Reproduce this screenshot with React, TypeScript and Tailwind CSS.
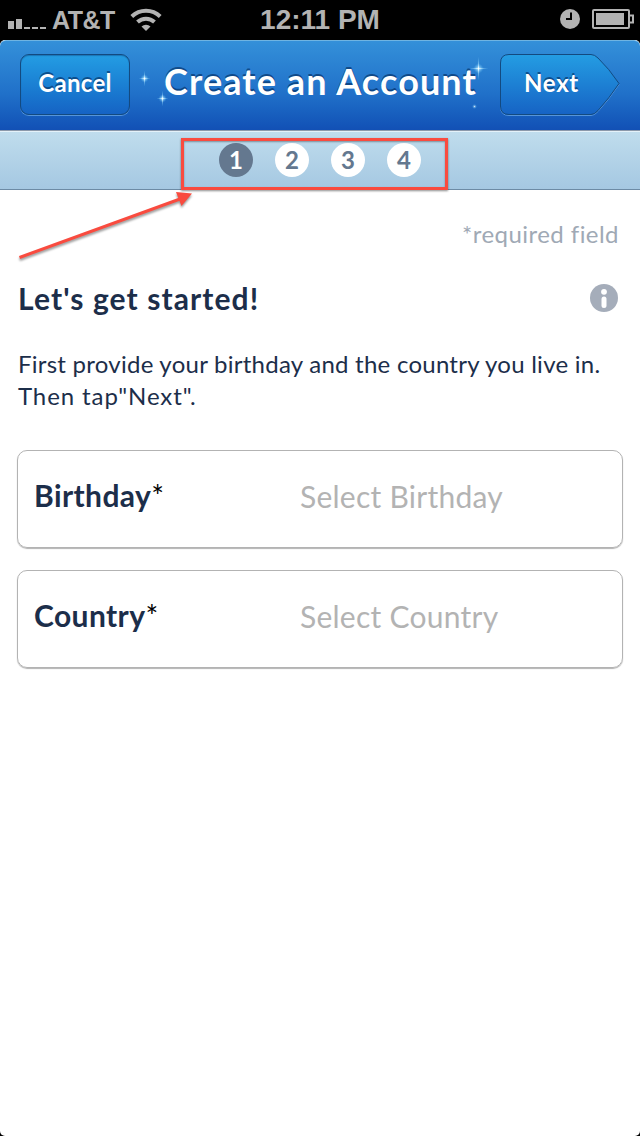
const steps = [1, 2, 3, 4]

const fields = [
  { id: 'birthday', label: 'Birthday', placeholder: 'Select Birthday' },
  { id: 'country', label: 'Country', placeholder: 'Select Country' }
]

function StatusBar() {
  return (
    <div className="flex h-10 items-center bg-black font-['Liberation_Sans',Arial,sans-serif] font-bold text-[#b3b3b3]">
      <div className="flex flex-1 items-center">
        <svg className="ml-2 shrink-0" width="38" height="40" fill="#b3b3b3">
          <rect x="0" y="21" width="6" height="8" />
          <rect x="8" y="19" width="6" height="10" />
          <rect x="16" y="27" width="6" height="2" />
          <rect x="24" y="27" width="6" height="2" />
          <rect x="32" y="27" width="6" height="2" />
        </svg>
        <span className="ml-[6px] w-[65px] text-[25px] leading-10 tracking-[-0.5px]">AT&amp;T</span>
        <svg className="ml-[12px] shrink-0" width="34" height="40" viewBox="0 0 34 40" fill="none" stroke="#b3b3b3">
          <path d="M2.800 16.500 A20.500 20.500 0 0 1 31.200 16.500" strokeWidth="4" />
          <path d="M8.500 22 A12.500 12.500 0 0 1 25.500 22" strokeWidth="4" />
          <path d="M12.500 26.500 A6.500 6.500 0 0 1 21.500 26.500 L17 31 Z" fill="#b3b3b3" stroke="none" />
        </svg>
      </div>
      <span className="text-[28px] leading-10">12:11 PM</span>
      <div className="flex flex-1 items-center justify-end">
        <svg width="20" height="40" viewBox="0 0 20 40">
          <circle cx="10" cy="19" r="10" fill="#b3b3b3" />
          <path d="M11 12.500 V19 H6" fill="none" stroke="#000" strokeWidth="2" />
        </svg>
        <svg className="ml-3 mr-1.5" width="42" height="40" viewBox="0 0 42 40">
          <rect x="1" y="10" width="36" height="18" rx="1" fill="none" stroke="#b3b3b3" strokeWidth="2" />
          <rect x="4" y="13" width="28" height="12" fill="#b3b3b3" />
          <path d="M38 15.500 H41 V22.500 H38" fill="none" stroke="#b3b3b3" strokeWidth="2" />
        </svg>
      </div>
    </div>
  )
}

function Sparkles() {
  return (
    <svg className="pointer-events-none absolute left-0 -top-px" width="640" height="90" viewBox="0 40 640 90">
      <defs>
        <radialGradient id="glow">
          <stop offset="0" stopColor="#fff" />
          <stop offset="0.25" stopColor="#bfeaff" stopOpacity="0.7" />
          <stop offset="1" stopColor="#5cc0f5" stopOpacity="0" />
        </radialGradient>
      </defs>
      <g fill="url(#glow)">
        <circle cx="144.500" cy="78.500" r="4" />
        <ellipse cx="144.500" cy="78.500" rx="6" ry="1.200" />
        <ellipse cx="144.500" cy="78.500" rx="1.200" ry="8" />
        <circle cx="162.500" cy="98.500" r="4" />
        <ellipse cx="162.500" cy="98.500" rx="6" ry="1.200" />
        <ellipse cx="162.500" cy="98.500" rx="1.200" ry="8" />
        <circle cx="478.500" cy="68.500" r="5" />
        <ellipse cx="478.500" cy="68.500" rx="10" ry="1.300" />
        <ellipse cx="478.500" cy="68.500" rx="1.300" ry="12" />
        <circle cx="474.500" cy="106.500" r="2.500" opacity="0.8" />
      </g>
    </svg>
  )
}

function Header() {
  return (
    <header className="relative flex h-[90px] items-start rounded-t-[6px] border-t border-[#6fb4e2] bg-linear-to-b from-[#3490d9] via-[#2070c9] via-60% to-[#1250b5] text-white">
      <Sparkles />
      <button className="ml-5 mt-[13px] h-[61px] w-[110px] rounded-[9px] border border-[#134a80] bg-linear-to-b from-[#249de3] to-[#1663c4] pb-[3px] text-2xl font-bold tracking-[0.3px] shadow-[0_1px_0_#5595da,inset_0_1px_1px_rgba(10,60,120,0.4)] [text-shadow:0_-2px_0_rgba(0,40,90,0.6)]">
        Cancel
      </button>
      <h1 className="flex-1 whitespace-nowrap pl-[11px] pt-[18px] text-center text-[36px] font-bold leading-[44px] tracking-[1.1px] [text-shadow:0_-2px_0_rgba(0,40,90,0.6)]">
        Create an Account
      </h1>
      <button className="relative mr-5 mt-[13px] h-[62px] w-[120px] pb-[4px] pr-[17px] text-2xl font-bold tracking-[0.7px] [text-shadow:0_-2px_0_rgba(0,40,90,0.6)]">
        <svg className="absolute inset-0" width="120" height="62" viewBox="0 0 120 62">
          <defs>
            <linearGradient id="nextFill" x1="0" y1="0" x2="0" y2="1">
              <stop offset="0" stopColor="#249de3" />
              <stop offset="1" stopColor="#1663c4" />
            </linearGradient>
          </defs>
          <path d="M9 1.500 H91 Q94.500 1.500 98 5 Q109 15.500 119 30.500 Q109 45.500 98 57.500 Q94.500 61.500 91 61.500 H9 Q.5 61.500 .5 53" fill="none" stroke="#5595da" />
          <path d="M9 .5 H91 Q94.500 .5 98 4 Q109 14.500 119 29.500 Q109 44.500 98 56.500 Q94.500 60.500 91 60.500 H9 Q.5 60.500 .5 52 V9 Q.5 .5 9 .5 Z" fill="url(#nextFill)" stroke="#134a80" />
        </svg>
        <span className="relative">Next</span>
      </button>
    </header>
  )
}

function StepBar() {
  return (
    <nav className="relative flex h-[60px] justify-center gap-[22px] border-b border-t border-b-[#6d8ba5] border-t-[#8c99aa] bg-linear-to-b from-[#c0dded] to-[#a5c8e2] pt-3 shadow-[inset_0_1px_0_#e4f1f9]">
      {steps.map((step) => (
        <span
          key={step}
          className={`flex size-[34px] items-center justify-center rounded-full text-2xl font-bold leading-none ${
            step === 1 ? 'bg-[#64788f] text-white' : 'bg-white text-[#64788f]'
          }`}
        >
          {step}
        </span>
      ))}
      <div className="absolute left-[181px] top-[7px] h-[52px] w-[267px] border-[3px] border-[#f94b3f] shadow-[0_1px_2px_rgba(0,0,0,0.45),inset_0_1px_2px_rgba(0,0,0,0.35)]" />
      <svg className="absolute left-0 top-[50px] drop-shadow-[0_2px_1px_rgba(0,0,0,0.4)]" width="210" height="90" viewBox="0 181 210 90">
        <path d="M19.500 257.500 L180 199" stroke="#f94b3f" strokeWidth="3" />
        <path d="M176 192 L192 193.500 L181.500 206 Z" fill="#f94b3f" />
      </svg>
    </nav>
  )
}

export default function App() {
  return (
    <div className="h-[1136px] w-[640px] overflow-hidden bg-black font-[Lato,sans-serif]">
      <StatusBar />
      <div className="h-[1096px] overflow-hidden rounded-[5px] bg-white">
        <Header />
        <StepBar />

        <main className="px-[17px] text-[#1c2e4a]">
          <p className="pr-1 pt-7 text-right text-2xl leading-8 tracking-[0.45px] text-[#a0a9b5]">*required field</p>

          <div className="mt-[30px] flex h-9 items-center justify-between pl-px pr-[5px]">
            <h2 className="pb-px text-[30px] font-bold leading-9 tracking-[1.1px]">Let&apos;s get started!</h2>
            <svg width="28" height="28" viewBox="0 0 28 28">
              <circle cx="14" cy="14" r="14" fill="#a5adba" />
              <circle cx="14" cy="7.800" r="2.900" fill="#fff" />
              <rect x="11.500" y="12.500" width="5" height="11.500" rx="2.500" fill="#fff" />
            </svg>
          </div>

          <p className="mt-8 whitespace-nowrap pl-px text-2xl leading-8 tracking-[0.25px]">
            First provide your birthday and the country you live in.
            <br />
            <span className="tracking-[0.9px]">Then tap&quot;Next&quot;.</span>
          </p>

          <div className="mt-[38px] flex flex-col gap-[22px]">
            {fields.map((field) => (
              <div
                key={field.id}
                className="flex h-[98px] items-start rounded-[10px] border border-[#b3b3b3] pl-4 pt-6 text-[30px] leading-10 shadow-[0_1px_1px_#b3b3b3]"
              >
                <div className="w-[266px] font-bold tracking-[0.4px]">
                  {field.label}
                  <span className="font-normal text-black">*</span>
                </div>
                <div className="pt-px tracking-[0.25px] text-[#b3b3b3]">{field.placeholder}</div>
              </div>
            ))}
          </div>
        </main>
      </div>
    </div>
  )
}
